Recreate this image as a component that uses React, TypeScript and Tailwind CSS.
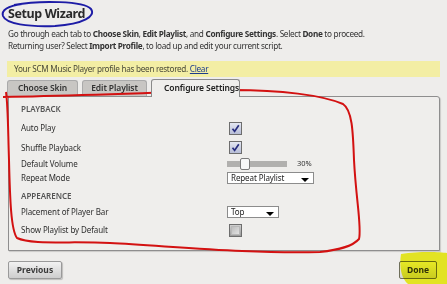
import React from 'react'

const font = { fontFamily: '"Noto Sans", "Open Sans", sans-serif' }

function Checkbox({ checked }: { checked?: boolean }) {
  return (
    <span
      className={`ml-[2px] flex h-[13px] w-[13px] items-center justify-center border border-[#6d6d6d] ${
        checked ? 'bg-gradient-to-b from-[#e4e7f2] to-[#b7bdd6]' : 'bg-gradient-to-b from-[#cfcfcf] to-[#9c9c9c]'
      }`}
    >
      {checked && (
        <svg width="9" height="9" viewBox="0 0 9 9">
          <path d="M1.5 4.8 L3.6 7.4 L7.8 1.2" fill="none" stroke="#262c7e" strokeWidth="1.7" />
        </svg>
      )}
      {!checked && <span className="h-[9px] w-[9px] border border-[#b8b8b8] bg-gradient-to-br from-[#bdbdbd] to-[#e2e2e2]" />}
    </span>
  )
}

function Select({ value, width }: { value: string; width: string }) {
  return (
    <span className={`relative flex h-[12px] items-center border border-[#8c8c8c] bg-white pl-[3px] text-[8px] leading-none tracking-[-0.1px] text-[#222] ${width}`}>
      {value}
      <span className="absolute right-[4px] bottom-[1px] h-0 w-0 border-x-[4px] border-t-[4px] border-x-transparent border-t-black" />
    </span>
  )
}

function Row({ label, h, children }: { label: string; h: string; children?: React.ReactNode }) {
  return (
    <div className={`flex items-center ${h}`}>
      <span className="w-[206px] text-[8px] leading-none tracking-[-0.1px] text-[#2e2e2e]">{label}</span>
      {children}
    </div>
  )
}

function Section({ title, h }: { title: string; h: string }) {
  return (
    <div className={`flex items-center text-[8px] font-semibold leading-none text-[#555] ${h}`}>{title}</div>
  )
}

export default function App() {
  return (
    <div className="relative h-[284px] w-[447px] overflow-hidden bg-[#eeedeb] px-[7px] text-[#2f2f2f]" style={font}>
      {/* Header */}
      <h1 className="flex h-[28px] items-center pl-[1px] text-[12.5px] font-bold tracking-[-0.4px] text-[#2b2b2b]">Setup Wizard</h1>
      <div className="pl-[1px] text-[8.2px] leading-[11.5px] tracking-[-0.3px] text-[#333]">
        <p>
          Go through each tab to <b>Choose Skin</b>, <b>Edit Playlist</b>, and <b>Configure Settings</b>. Select <b>Done</b> to proceed.
        </p>
        <p>
          Returning user? Select <b>Import Profile</b>, to load up and edit your current script.
        </p>
      </div>

      {/* Restored notice */}
      <div className="mt-[10px] flex h-[16px] items-center bg-[#f3eea4] pl-[7px] text-[8.2px] tracking-[-0.3px] text-[#4a4a3a]">
        Your SCM Music Player profile has been restored.&nbsp;
        <a className="text-[#1c3c8c] underline">Clear</a>
      </div>

      {/* Tabs */}
      <div className="mt-[3px] flex h-[16px] items-end gap-[4px] text-[8.5px] font-semibold leading-none tracking-[-0.1px]">
        <div className="flex h-[16px] w-[71px] items-center justify-center rounded-t-[3px] border border-b-0 border-[#aaa] bg-[#c8c6c3] text-[#333]">
          Choose Skin
        </div>
        <div className="flex h-[16px] w-[65px] items-center justify-center rounded-t-[3px] border border-b-0 border-[#aaa] bg-[#c8c6c3] text-[#333]">
          Edit Playlist
        </div>
        <div className="relative z-10 -mb-px flex h-[18px] w-[89px] items-center overflow-hidden whitespace-nowrap rounded-t-[3px] border border-b-0 border-[#8a8a8a] bg-[#efeeec] pl-[12px] text-[#222]">
          Configure Settings
        </div>
      </div>

      {/* Settings panel */}
      <div className="ml-[1px] h-[155px] rounded-tr-[3px] border border-[#8e8e8e] bg-[#efeeec] pt-[3px] pl-[12px] shadow-[1px_1px_1px_rgba(0,0,0,0.15)]">
        <Section title="PLAYBACK" h="h-[18px]" />
        <Row label="Auto Play" h="h-[20px]">
          <Checkbox checked />
        </Row>
        <Row label="Shuffle Playback" h="h-[19px]">
          <Checkbox checked />
        </Row>
        <Row label="Default Volume" h="h-[14px]">
          <span className="relative h-[6px] w-[60px] bg-[#b1b0ae]">
            <span className="absolute top-[-3px] left-[13px] h-[12px] w-[10px] rounded-[2px] border border-[#7a7a7a] bg-[#f7f7f7]" />
          </span>
          <span className="ml-[10px] text-[7.5px] leading-none text-[#333]">30%</span>
        </Row>
        <Row label="Repeat Mode" h="h-[14px]">
          <Select value="Repeat Playlist" width="w-[87px]" />
        </Row>
        <Section title="APPEARENCE" h="h-[21px]" />
        <Row label="Placement of Player Bar" h="h-[12px]">
          <Select value="Top" width="w-[52px]" />
        </Row>
        <Row label="Show Playlist by Default" h="h-[24px]">
          <Checkbox />
        </Row>
      </div>

      {/* Footer */}
      <div className="mt-[10px] flex justify-between pl-[1px] pr-[3px]">
        <button className="flex h-[18px] w-[54px] items-center justify-center rounded-[2px] border border-[#9a9a9a] bg-gradient-to-b from-[#f2f2f2] to-[#cdcdcd] text-[8.5px] font-bold text-[#3a3a3a] shadow-[1px_1px_1px_rgba(0,0,0,0.2)]">
          Previous
        </button>
        <button className="flex h-[18px] w-[38px] items-center justify-center rounded-[2px] border border-[#6e6e5a] bg-gradient-to-b from-[#f2f2f2] to-[#d4d4d4] text-[8.5px] font-bold text-[#333]">
          Done
        </button>
      </div>

      {/* Hand-drawn annotations */}
      <svg className="pointer-events-none absolute inset-0" width="447" height="284" viewBox="0 0 447 284">
        <path
          d="M14 5 C40 0 84 1 91 9 C96 16 84 24 55 26 C28 27 6 24 3 16 C1 10 8 6 22 4"
          fill="none"
          stroke="#1d1ca6"
          strokeWidth="2"
        />
        <path
          d="M3 97 C60 96 150 93 233 90 C280 90 322 95 343 104 C352 110 353 130 354 160 C356 200 362 228 359 239 C352 247 338 250 320 252 C250 254 170 246 110 243 C70 241 32 245 17 238 C11 230 10 200 9 160 C8 130 8 105 6 92"
          fill="none"
          stroke="#d31111"
          strokeWidth="2"
        />
        <g style={{ mixBlendMode: 'multiply' }}>
          <path d="M401 254 C420 251 440 252 447 253 L447 284 L408 284 C401 278 399 266 401 254 Z" fill="#f1f300" opacity="0.85" />
        </g>
      </svg>
    </div>
  )
}
